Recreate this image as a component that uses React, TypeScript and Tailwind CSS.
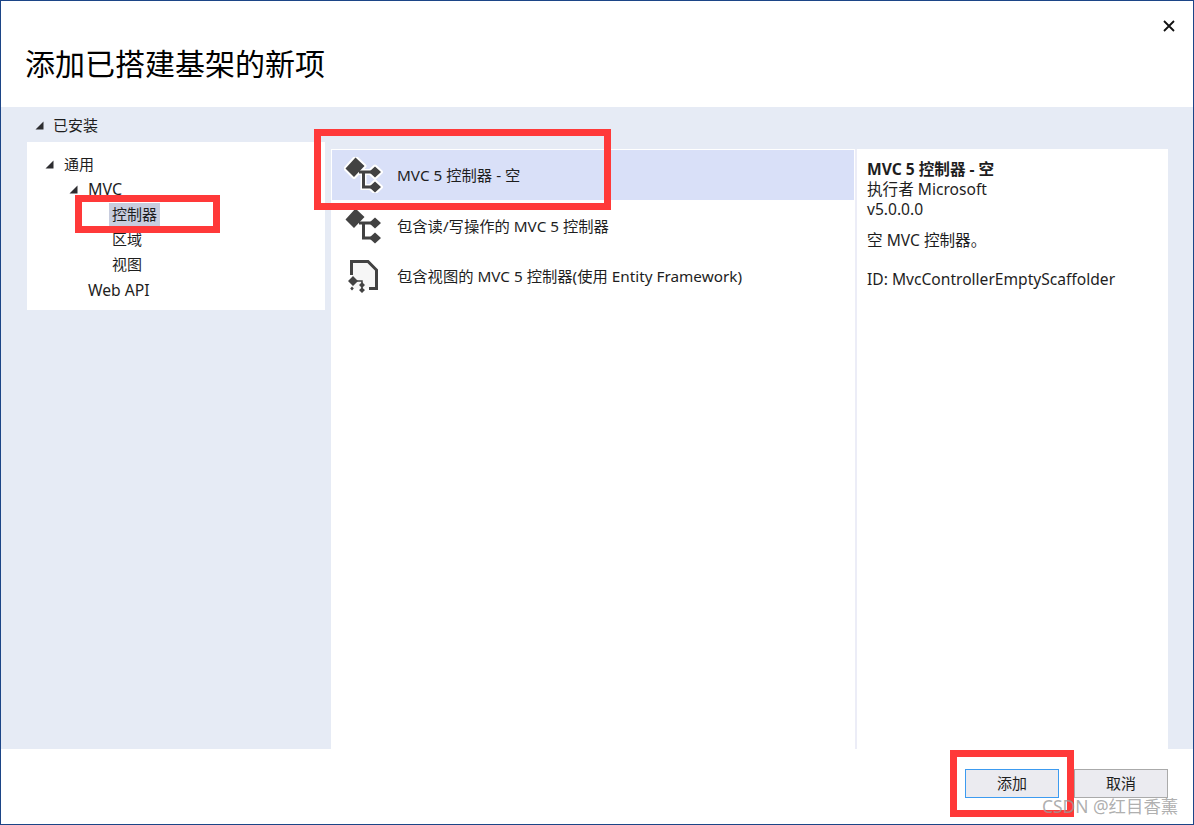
const font = "[font-family:'Noto_Sans','Noto_Sans_CJK_SC',sans-serif]"

function Arrow() {
    return (
        <svg width="9" height="9" viewBox="0 0 9 9" className="shrink-0">
            <polygon points="8.5,0.5 8.5,8.5 0.5,8.5" fill="#2d2d30" />
        </svg>
    )
}

function ControllerIcon({ halo }: { halo?: boolean }) {
    const diamonds = "M11.5 0.5L20.5 9L10 20L1.5 11.5ZM31 9.5L37 15L31 20.5L25 15ZM31 24.5L37 30L31 35.5L25 30Z"
    const lines = "M15 15H31M19.5 15V30H31"
    return (
        <svg width="40" height="36" viewBox="0 0 40 36" className="shrink-0">
            {halo && <path d={lines} fill="none" stroke="#ffffff" strokeWidth="6" />}
            {halo && <path d={diamonds} fill="#ffffff" stroke="#ffffff" strokeWidth="4" strokeLinejoin="round" />}
            <path d={lines} fill="none" stroke="#424242" strokeWidth="3" />
            <path d={diamonds} fill="#424242" />
        </svg>
    )
}

function ViewIcon() {
    return (
        <svg width="40" height="36" viewBox="0 0 40 36" className="shrink-0">
            <path d="M8 3.5H24L32.5 12V30.5H8Z" fill="#f6f6f6" />
            <path d="M7.5 17V3.5H24L32.5 12V30.5H25" fill="none" stroke="#424242" strokeWidth="3" />
            <path d="M12 23H18V32" fill="none" stroke="#424242" strokeWidth="1.5" />
            <path d="M9 18L14 23L9 28L4 23ZM18 24L21 27L18 30L15 27ZM18 29.5L21 32L18 35L15 32ZM8 28.5L9.8 30.5L8 32.5L6.2 30.5Z" fill="#424242" />
        </svg>
    )
}

function ItemRow({ text, selected, icon }: { text: string; selected?: boolean; icon: React.ReactNode }) {
    return (
        <div className={`flex items-center pl-[12px] gap-[13px] border border-transparent ${selected ? "h-[52px] bg-[#d9e0f8] border-white" : "h-[50px]"}`}>
            {icon}
            <span>{text}</span>
        </div>
    )
}

export default function App() {
    return (
        <div className={`relative w-[1194px] h-[825px] flex flex-col bg-white border border-[#1c4587] overflow-hidden text-[15px] leading-[25px] text-[#1e1e1e] ${font}`}>
            <div className="h-[106px] shrink-0 flex items-start justify-between pl-[24px] pr-[18px]">
                <h1 className="mt-[39px] text-[30px] leading-[48px] text-black">添加已搭建基架的新项</h1>
                <svg width="12" height="12" viewBox="0 0 12 12" className="mt-[19px]">
                    <path d="M1 1L11 11M11 1L1 11" stroke="#111111" strokeWidth="1.8" />
                </svg>
            </div>

            <div className="flex-1 flex bg-[#e6ebf5] pr-[25px]">
                <div className="w-[330px] shrink-0 pt-[6px] flex flex-col">
                    <div className="flex items-center gap-[9px] pl-[34px] h-[25px]">
                        <Arrow />
                        <span>已安装</span>
                    </div>
                    <div className="ml-[26px] mt-[4px] mr-[6px] h-[168px] bg-white pt-[10px] flex flex-col">
                        <div className="flex items-center h-[25px] pl-[18px] gap-[10px]">
                            <Arrow />
                            <span>通用</span>
                        </div>
                        <div className="flex items-center h-[25px] pl-[42px] gap-[10px] text-[16px]">
                            <Arrow />
                            <span>MVC</span>
                        </div>
                        <div className="h-[25px] pl-[82px] flex items-center">
                            <span className="bg-[#c8cdde] px-[3px] leading-[23px]">控制器</span>
                        </div>
                        <div className="h-[25px] pl-[85px] flex items-center">区域</div>
                        <div className="h-[25px] pl-[85px] flex items-center">视图</div>
                        <div className="h-[26px] pt-[1px] pl-[61px] flex items-center text-[15.7px]">Web API</div>
                    </div>
                </div>

                <div className="flex-1 mt-[42px] flex bg-white">
                    <div className="w-[524px] shrink-0 flex flex-col text-[15.3px]">
                        <ItemRow text="MVC 5 控制器 - 空" selected icon={<ControllerIcon halo />} />
                        <ItemRow text="包含读/写操作的 MVC 5 控制器" icon={<ControllerIcon />} />
                        <ItemRow text="包含视图的 MVC 5 控制器(使用 Entity Framework)" icon={<ViewIcon />} />
                    </div>
                    <div className="flex-1 border-l-2 border-[#ecedf7] pl-[10px] pt-[10px] text-[15.6px] leading-[20px]">
                        <div className="font-bold">MVC 5 控制器 - 空</div>
                        <div>执行者 Microsoft</div>
                        <div>v5.0.0.0</div>
                        <div className="mt-[11px]">空 MVC 控制器。</div>
                        <div className="mt-[19px]">ID: MvcControllerEmptyScaffolder</div>
                    </div>
                </div>
            </div>

            <div className="h-[75px] shrink-0 flex justify-end gap-[15px] pt-[20px] pr-[25px]">
                <button className="w-[94px] h-[29px] bg-[#ebebf0] border border-[#3d9bf0]">添加</button>
                <button className="w-[94px] h-[29px] bg-[#ebebf0] border border-[#aaaaaa]">取消</button>
            </div>

            {/* red annotation boxes */}
            <div className="absolute left-[74px] top-[194px] w-[145px] h-[38px] border-[7px] border-[#ff3939]" />
            <div className="absolute left-[313px] top-[128px] w-[297px] h-[81px] border-[7px] border-[#ff3939]" />
            <div className="absolute left-[949px] top-[749px] w-[124px] h-[67px] border-[7px] border-[#ff3939]" />
            <div className="absolute left-[1041px] top-[793px] text-[17.4px] leading-[24px] text-[#9a9a9a]/80">CSDN @红目香薰</div>
        </div>
    )
}
